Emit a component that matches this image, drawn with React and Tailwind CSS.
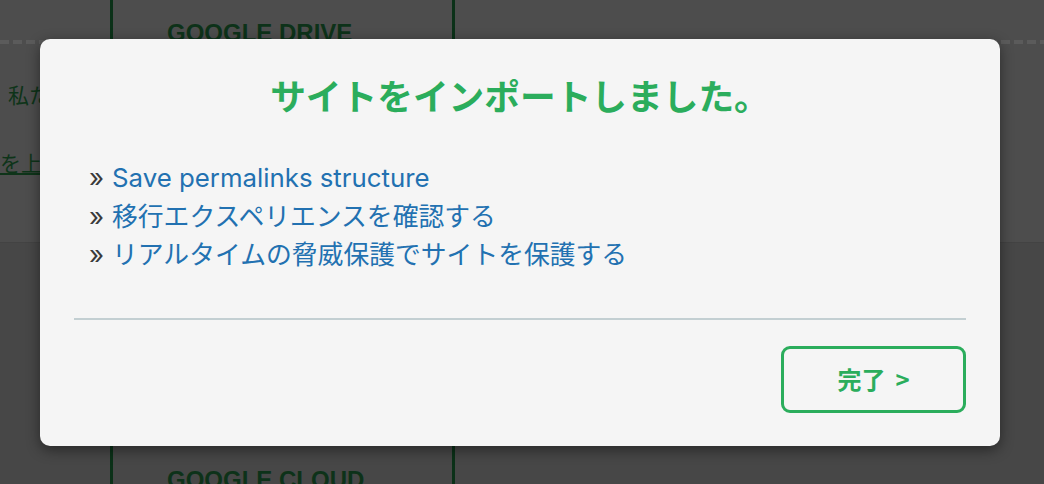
import React from 'react';

const links = [
  'Save permalinks structure',
  '移行エクスペリエンスを確認する',
  'リアルタイムの脅威保護でサイトを保護する',
];

const dashed = 'h-[4px] bg-[repeating-linear-gradient(90deg,#5b5b5b_0_9px,transparent_9px_13px)]';

const App = () => {
  return (
    <div
      className="relative w-[1044px] h-[484px] overflow-hidden flex flex-col bg-[#474747]"
      style={{ fontFamily: 'Inter, "Noto Sans CJK JP", sans-serif' }}
    >
      {/* page behind the overlay */}
      <div className="h-[243px] shrink-0 flex bg-[#4d4d4d] border-b border-[#434343]">
        <div className="w-[110px] flex flex-col">
          <div className={`mt-[40px] ${dashed}`} />
          <p className="mt-[36px] pl-[8px] text-[21px] text-[#0e3419] whitespace-nowrap">私たち</p>
          <a className="mt-[36px] text-[21px] text-[#0e3419] underline whitespace-nowrap">を上げる</a>
        </div>
        <div className="w-[345px] border-x-[3px] border-[#0b3118] pt-[18px] pl-[54px]">
          <div className="text-[24px] font-bold text-[#0d3219] leading-[30px]" style={{ fontFamily: '"Liberation Sans", sans-serif' }}>
            GOOGLE DRIVE
          </div>
        </div>
        <div className="flex-1">
          <div className={`mt-[40px] ${dashed}`} />
        </div>
      </div>
      <div className="flex-1 flex min-h-0">
        <div className="w-[110px]" />
        <div className="w-[345px] border-x-[3px] border-[#0b3118] pt-[222px] pl-[54px]">
          <div className="text-[24px] font-bold text-[#0d3219] leading-[30px] whitespace-nowrap" style={{ fontFamily: '"Liberation Sans", sans-serif' }}>
            GOOGLE CLOUD
          </div>
        </div>
      </div>

      {/* modal */}
      <div className="absolute left-[40px] top-[39px] w-[960px] h-[407px] rounded-[10px] bg-[#f5f5f5] shadow-[0_4px_14px_rgba(0,0,0,0.45)] px-[34px] pt-[33px] flex flex-col">
        <h2
          className="text-center text-[35.7px] leading-[45px] font-bold text-[#2bad5c]"
          style={{ fontFamily: '"Noto Sans CJK JP", sans-serif' }}
        >
          サイトをインポートしました。
        </h2>
        <ul className="mt-[42px] pl-[15px] text-[25.8px] leading-[38.5px]">
          {links.map((t) => (
            <li key={t} className="flex whitespace-nowrap">
              <span className="w-[23px] text-[#3a3a3a]">»</span>
              <a href="#" className="text-[#2271b1]">{t}</a>
            </li>
          ))}
        </ul>
        <div className="mt-[43px] h-[2px] bg-[#c3cfd2]" />
        <div className="mt-[26px] flex justify-end">
          <button
            className="w-[185px] h-[67px] rounded-[9px] border-[3px] border-[#2bad5c] text-[#2bad5c] text-[24px] font-bold flex items-center justify-center gap-[10px]"
            style={{ fontFamily: '"Noto Sans CJK JP", sans-serif' }}
          >
            <span>完了</span>
            <span>&gt;</span>
          </button>
        </div>
      </div>
    </div>
  );
};

export default App;
